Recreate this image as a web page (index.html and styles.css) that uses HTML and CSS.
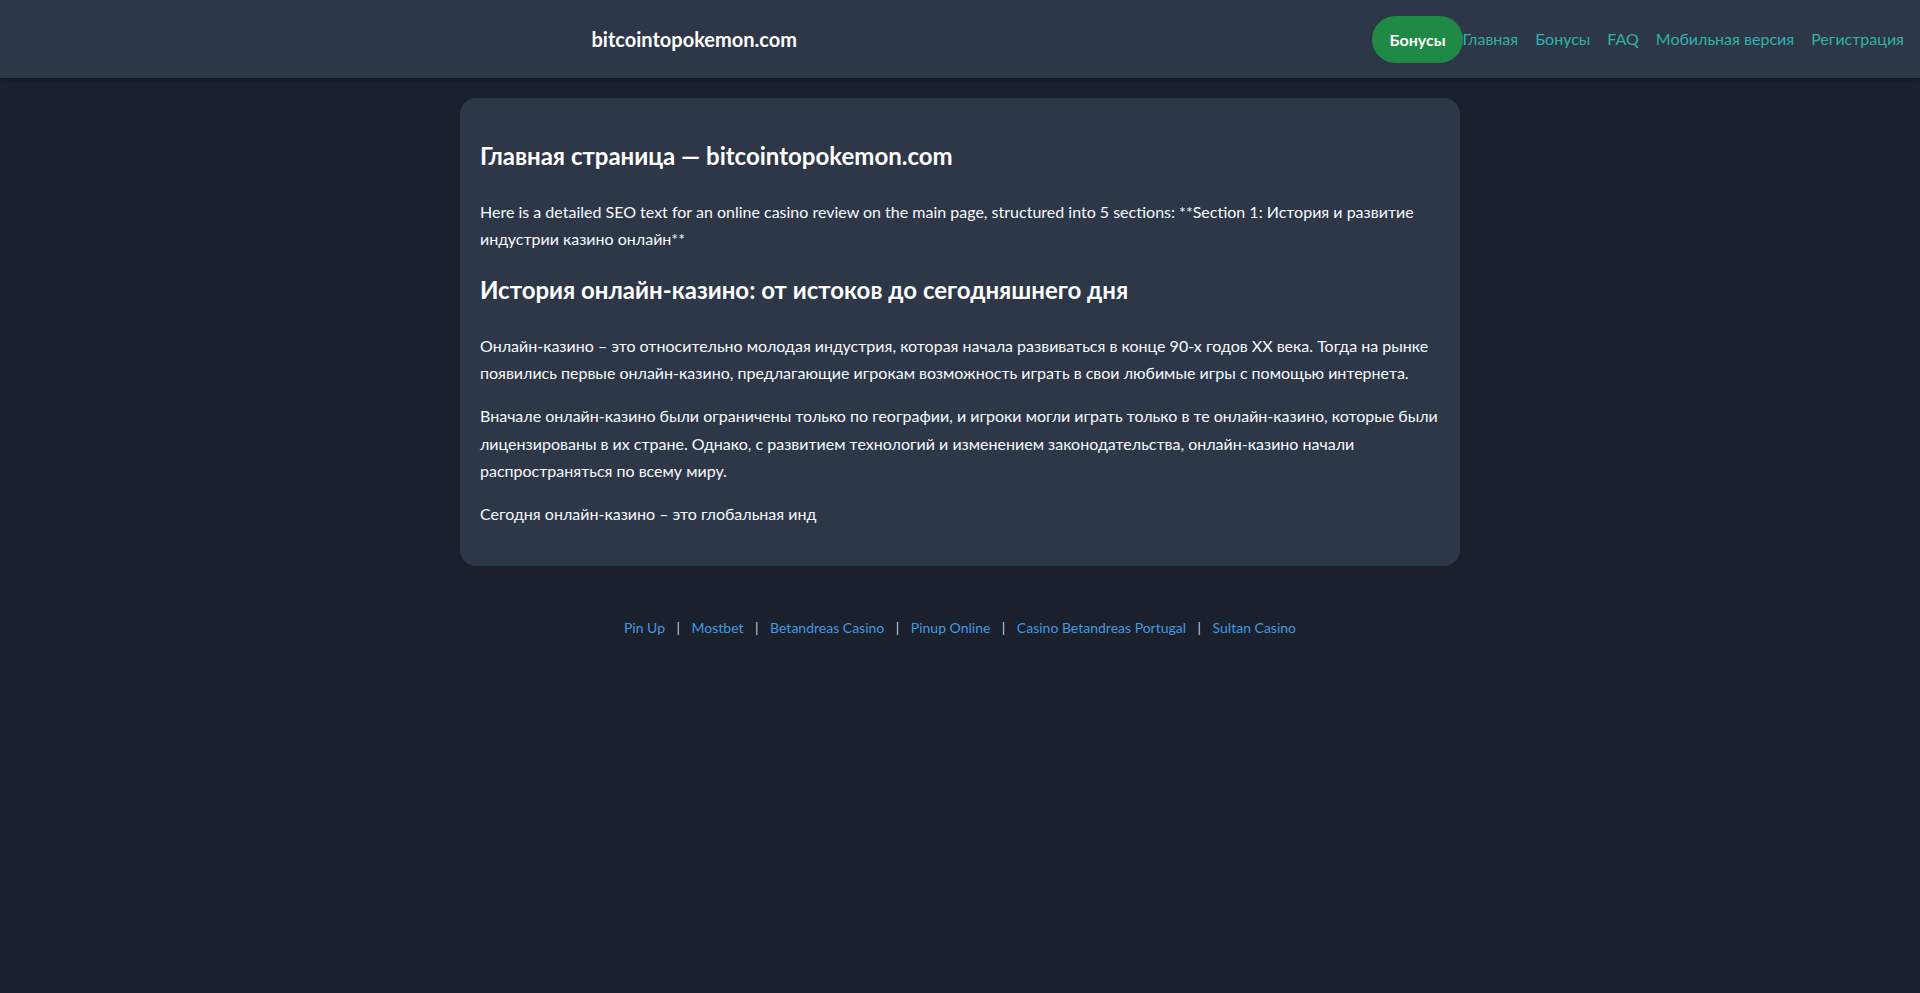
FILE: index.html
```html
<!DOCTYPE html>
<html lang="ru">

<head>
    <meta charset="UTF-8">
    <meta name="viewport" content="width=device-width, initial-scale=1.0">
    <title>Главная страница — bitcointopokemon.com</title>
    <link rel="stylesheet" href="styles.css">
</head>

<body>
    <!-- Header -->
    <header class="site-header">
        <div class="logo">bitcointopokemon.com</div>
        <nav class="main-nav">
            <a href="#" class="bonus-btn">Бонусы</a>
            <ul class="nav-links">
                <li><a href="#">Главная</a></li>
                <li><a href="#">Бонусы</a></li>
                <li><a href="#">FAQ</a></li>
                <li><a href="#">Мобильная версия</a></li>
                <li><a href="#">Регистрация</a></li>
            </ul>
        </nav>
    </header>

    <!-- Main content -->
    <main class="content-box">
        <h1>Главная страница — bitcointopokemon.com</h1>
        <p>Here is a detailed SEO text for an online casino review on the main page, structured into 5 sections: **Section 1: История и развитие индустрии казино онлайн**</p>
        <h2>История онлайн-казино: от истоков до сегодняшнего дня</h2>
        <p>Онлайн-казино – это относительно молодая индустрия, которая начала развиваться в конце 90-х годов XX века. Тогда на рынке появились первые онлайн-казино, предлагающие игрокам возможность играть в свои любимые игры с помощью интернета.</p>
        <p>Вначале онлайн-казино были ограничены только по географии, и игроки могли играть только в те онлайн-казино, которые были лицензированы в их стране. Однако, с развитием технологий и изменением законодательства, онлайн-казино начали распространяться по всему миру.</p>
        <p>Сегодня онлайн-казино – это глобальная инд</p>
    </main>

    <!-- Footer links -->
    <footer class="site-footer">
        <a href="#">Pin Up</a><span class="sep">|</span><a href="#">Mostbet</a><span class="sep">|</span><a href="#">Betandreas Casino</a><span class="sep">|</span><a href="#">Pinup Online</a><span class="sep">|</span><a href="#">Casino Betandreas Portugal</a><span class="sep">|</span><a href="#">Sultan Casino</a>
    </footer>
</body>

</html>
```

FILE: styles.css
```css
body {
    margin: 0;
    padding: 0;
    font-family: 'Lato', 'Noto Sans', sans-serif;
    background-color: #1a202c;
    color: #f7fafc;
    line-height: 1.7;
}

.site-header {
    display: flex;
    align-items: center;
    height: 78px;
    padding: 0 16px;
    background-color: #2d3748;
    box-shadow: 0 2px 4px rgba(0, 0, 0, 0.2);
}

.logo {
    flex: 1;
    text-align: center;
    font-size: 20px;
    font-weight: 700;
    color: #ffffff;
}

.main-nav {
    display: flex;
    align-items: center;
}

.bonus-btn {
    display: inline-block;
    background-color: #1f8a46;
    color: #ffffff;
    font-weight: 700;
    font-size: 16px;
    line-height: 19px;
    padding: 14px 17px;
    border-radius: 24px;
    text-decoration: none;
}

.nav-links {
    display: flex;
    gap: 17px;
    list-style: none;
    margin: 0;
    padding: 0;
}

.nav-links a {
    color: #2fb3a6;
    font-size: 16px;
    text-decoration: none;
}

.content-box {
    display: block;
    width: 1000px;
    box-sizing: border-box;
    margin: 20px auto 0;
    padding: 20px 20px 23px;
    background-color: #2d3748;
    border-radius: 16px;
}

.content-box h1,
.content-box h2 {
    font-size: 24px;
    font-weight: 700;
    color: #ffffff;
    margin: 18px 0 21px;
}

.content-box p {
    font-size: 16px;
    margin: 16px 0;
}

.site-footer {
    text-align: center;
    padding: 50px 0;
    font-size: 14px;
}

.site-footer a {
    color: #4299e1;
    text-decoration: none;
}

.site-footer .sep {
    color: #cbd5e0;
    margin: 0 11.5px;
}
```
